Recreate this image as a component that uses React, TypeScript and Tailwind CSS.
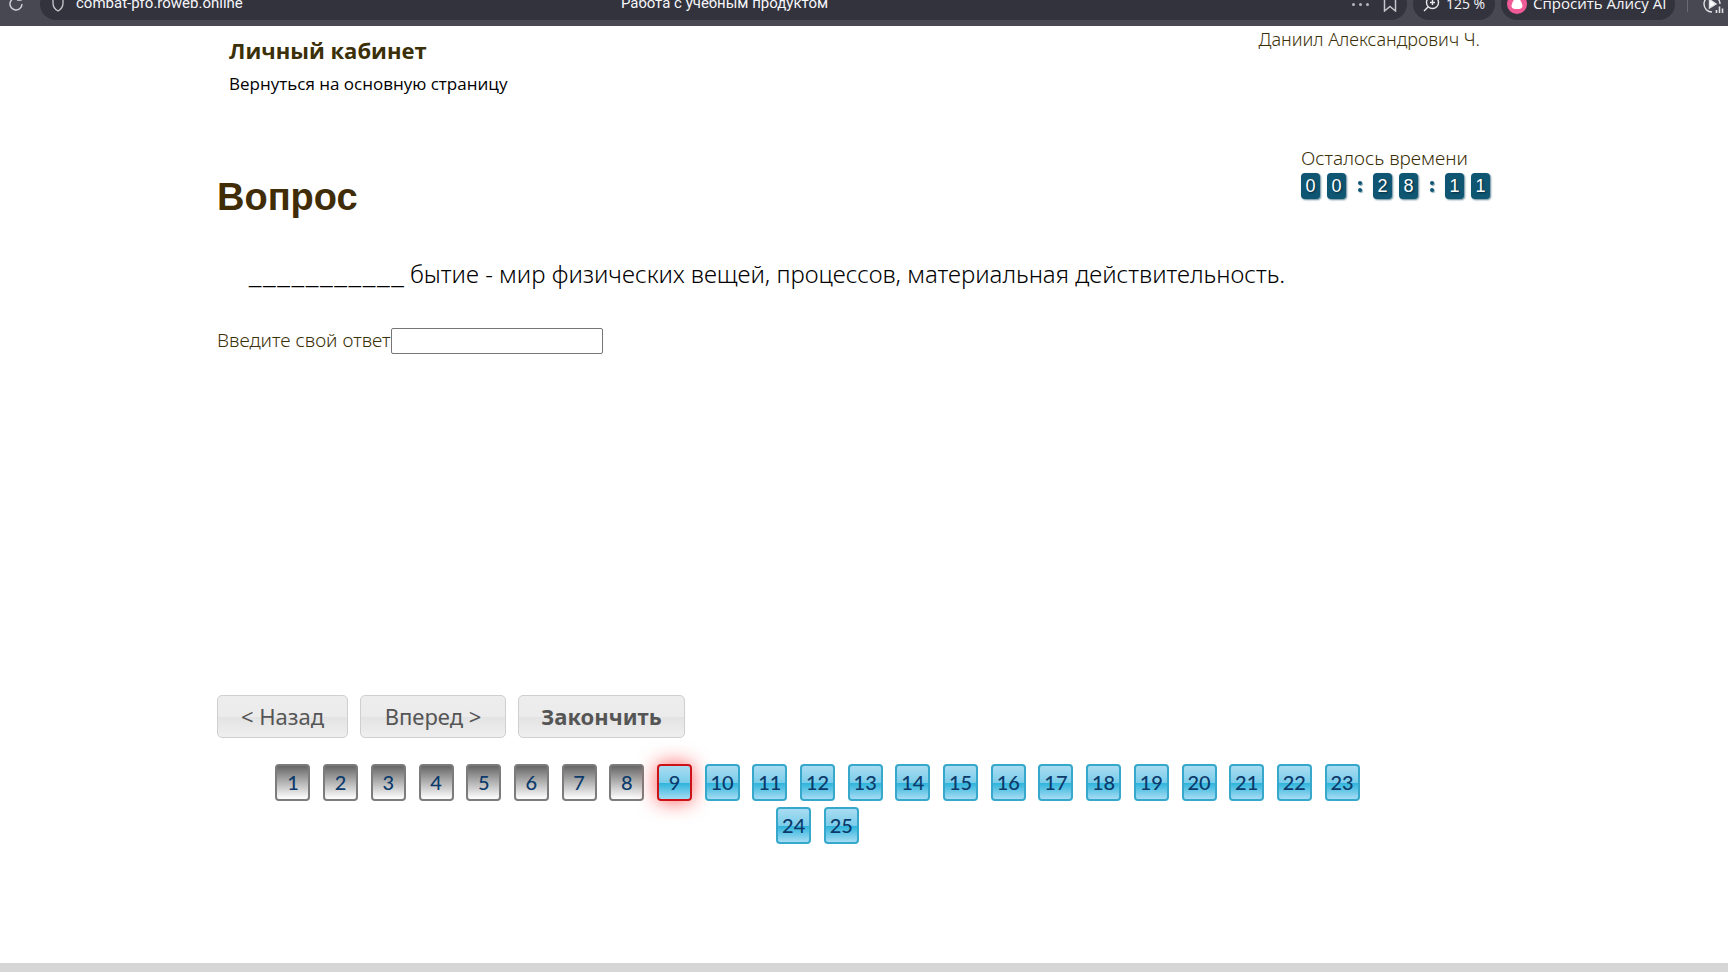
import { useState } from "react";
import clsx from "clsx";

const TOTAL = 25;
const ANSWERED = 8;

function BrowserBar() {
  return (
    <div className="flex h-[26px] items-end overflow-hidden bg-[#484852] pb-[6px] font-['Open_Sans',sans-serif] text-sm font-normal text-[#f6f6fa]">
      <button aria-label="Обновить" className="flex h-8 w-10 shrink-0 items-center pl-2">
        <svg width="16" height="16" viewBox="0 0 16 16" fill="none" stroke="#d4d4da" strokeWidth="1.4">
          <path d="M14 8a6 6 0 1 1-2-4.5" />
          <path d="M13 0v4h-4" />
        </svg>
      </button>
      <div className="flex h-8 min-w-0 flex-1 items-center rounded-full bg-[#33333d] pr-[10px] pl-3 font-['Roboto',sans-serif]">
        <div className="flex flex-1 items-center gap-3">
          <svg className="shrink-0" width="12" height="17" viewBox="0 0 12 17" fill="none" stroke="#c8c8ce" strokeWidth="1.3">
            <path d="M6 1 L11 3 V8 C11 12 9 14.500 6 16 C3 14.500 1 12 1 8 V3 Z" />
          </svg>
          <span className="text-[15px]">combat-pfo.roweb.online</span>
        </div>
        <span className="text-[15px]">Работа с учебным продуктом</span>
        <div className="flex flex-1 items-center justify-end gap-[14px]">
          <button aria-label="Ещё" className="flex gap-[4px]">
            <i className="size-[3px] rounded-full bg-[#b6b6bd]" />
            <i className="size-[3px] rounded-full bg-[#b6b6bd]" />
            <i className="size-[3px] rounded-full bg-[#b6b6bd]" />
          </button>
          <button aria-label="Закладка">
            <svg width="14" height="16" viewBox="0 0 14 16" fill="none" stroke="#c4c4ca" strokeWidth="1.500">
              <path d="M1.500 0 V15 L7 10.500 L12.500 15 V0" />
            </svg>
          </button>
        </div>
      </div>
      <button className="ml-[6px] flex h-8 w-[82px] shrink-0 items-center justify-center gap-[6px] rounded-full bg-[#33333d]">
        <svg width="17" height="16" viewBox="0 0 17 16" fill="none" stroke="#e8e8ec" strokeWidth="1.4">
          <circle cx="9.500" cy="6.500" r="6" />
          <path d="M5 11 L1 15 M9.500 4 V9 M7 6.500 H12" />
        </svg>
        125 %
      </button>
      <button className="ml-[6px] flex h-8 w-[174px] shrink-0 items-center gap-[6px] rounded-full bg-[#33333d] pl-[6px] text-[15px] whitespace-nowrap">
        <svg className="shrink-0" width="20" height="20" viewBox="0 0 20 20">
          <circle cx="10" cy="10" r="10" fill="#f05a96" />
          <path d="M10 3 C12 3 15.500 9.500 15.500 12 C15.500 14.500 13 15 10 15 C7 15 4.500 14.500 4.500 12 C4.500 9.500 8 3 10 3 Z" fill="#fff" />
        </svg>
        Спросить Алису AI
      </button>
      <div className="mb-2 ml-3 h-6 w-px shrink-0 bg-[#6a6a74]" />
      <button aria-label="Видео" className="ml-[15px] flex h-8 w-[25px] shrink-0 items-center">
        <svg className="shrink-0" width="22" height="20" viewBox="0 0 22 20" fill="none" stroke="#e0e0e5" strokeWidth="1.400">
          <path d="M9 18 A8 8 0 1 1 17 10" />
          <path d="M6.500 5.500 L13 10 L6.500 14 Z" fill="#fff" />
          <path d="M13.500 19 V16 M16.500 19 V12.500 M19.500 19 V14.500" strokeWidth="1.600" />
        </svg>
      </button>
    </div>
  );
}

function Digit({ value }: { value: string }) {
  return (
    <span className="flex h-[26px] w-[19px] items-center justify-center rounded-[4px] bg-[#0f5673] shadow-[1px_1px_2px_#5f8797] [text-shadow:1px_1px_2px_#062a3a]">
      {value}
    </span>
  );
}

function Colon() {
  return (
    <span className="flex w-[13px] flex-col items-center gap-[3px]">
      <i className="size-1 rounded-full bg-[#0f5673] shadow-[1px_1px_1px_#8ba9b5]" />
      <i className="size-1 rounded-full bg-[#0f5673] shadow-[1px_1px_1px_#8ba9b5]" />
    </span>
  );
}

function Timer() {
  return (
    <div className="w-[191px]">
      <div className="text-[19px] leading-6">Осталось времени</div>
      <div className="mt-[3px] flex items-center gap-[7px] font-['Liberation_Sans',sans-serif] text-lg font-normal text-white">
        <Digit value="0" />
        <Digit value="0" />
        <Colon />
        <Digit value="2" />
        <Digit value="8" />
        <Colon />
        <Digit value="1" />
        <Digit value="1" />
      </div>
    </div>
  );
}

// the gap in the sentence is a row of separate underscores
function Blank() {
  return (
    <span className="inline-flex gap-[2px] font-['Liberation_Sans',sans-serif] text-[22px] leading-6">
      {Array.from({ length: 11 }, (_, i) => (
        <span key={i}>_</span>
      ))}
    </span>
  );
}

const navButton =
  "h-[43px] rounded-[5px] border border-[#cfcfcf] bg-[linear-gradient(#ededed_0%,#ebebeb_50%,#e3e3e3_52%,#efefef_100%)] text-[22px] text-[#555]";

export default function App() {
  const [answer, setAnswer] = useState("");
  const [current, setCurrent] = useState(9);

  return (
    <div className="flex min-h-screen flex-col bg-white font-['Noto_Sans',sans-serif] font-light text-[#3b3008]">
      <BrowserBar />

      <div className="mx-auto w-3/4 flex-1 pl-px">
        <header className="flex justify-between pr-8 pl-3">
          <div className="font-['Open_Sans',sans-serif]">
            <h1 className="mt-2 text-[22px] leading-8 font-bold">Личный кабинет</h1>
            <a href="#" className="mt-[6px] block text-[17px] leading-6 font-normal text-black">Вернуться на основную страницу</a>
          </div>
          <div className="mt-px text-lg leading-6">Даниил Александрович Ч.</div>
        </header>

        <main>
          <div className="mt-[50px] flex items-start justify-between pr-5">
            <h2 className="mt-7 font-['Liberation_Sans',sans-serif] text-[38px] leading-[46px] font-bold text-[#402d08]">Вопрос</h2>
            <Timer />
          </div>

          <p className="mt-9 pl-8 text-2xl leading-9 text-black">
            <Blank /> бытие - мир физических вещей, процессов, материальная действительность.
          </p>

          <div className="mt-9 flex items-start">
            <label htmlFor="answer" className="text-[19px] leading-6">Введите свой ответ</label>
            <input
              id="answer"
              type="text"
              value={answer}
              onChange={(e) => setAnswer(e.target.value)}
              className="h-[26px] w-[212px] rounded-[2px] border border-[#767676] px-1 text-base text-black"
            />
          </div>

          <div className="mt-[341px] flex gap-3">
            <button className={clsx(navButton, "w-[131px] font-normal")} onClick={() => setCurrent(Math.max(1, current - 1))}>
              &lt; Назад
            </button>
            <button className={clsx(navButton, "w-[146px] font-normal")} onClick={() => setCurrent(Math.min(TOTAL, current + 1))}>
              Вперед &gt;
            </button>
            <button className={clsx(navButton, "w-[167px] font-bold")}>Закончить</button>
          </div>

          <nav className="mt-6 max-w-[1201px] px-12 text-center font-['Open_Sans',sans-serif] text-lg leading-[43px]">
            {Array.from({ length: TOTAL }, (_, i) => i + 1).map((n) => (
              <span key={n}>
                <button
                  onClick={() => setCurrent(n)}
                  className={clsx(
                    "mx-1 h-[37px] w-[35px] rounded-[4px] border-2 font-['Lato',sans-serif] text-xl leading-8 font-medium text-[#0b3a6b]",
                    n <= ANSWERED
                      ? "bg-[linear-gradient(#666_0%,#b4b4b4_50%,#fff_100%)]"
                      : "bg-[linear-gradient(#a9dcf2_0%,#7bcdea_50%,#2fb4dc_52%,#a5dcf3_100%)]",
                    n === current
                      ? "border-[#cc1216] shadow-[0_0_20px_#ff5a5a]"
                      : n <= ANSWERED
                        ? "border-[#7c7c7c]"
                        : "border-[#35a8cb]"
                  )}
                >
                  {n}
                </button>{" "}
              </span>
            ))}
          </nav>
        </main>
      </div>

      <footer className="h-[9px] bg-[#d6d6d6]" />
    </div>
  );
}
